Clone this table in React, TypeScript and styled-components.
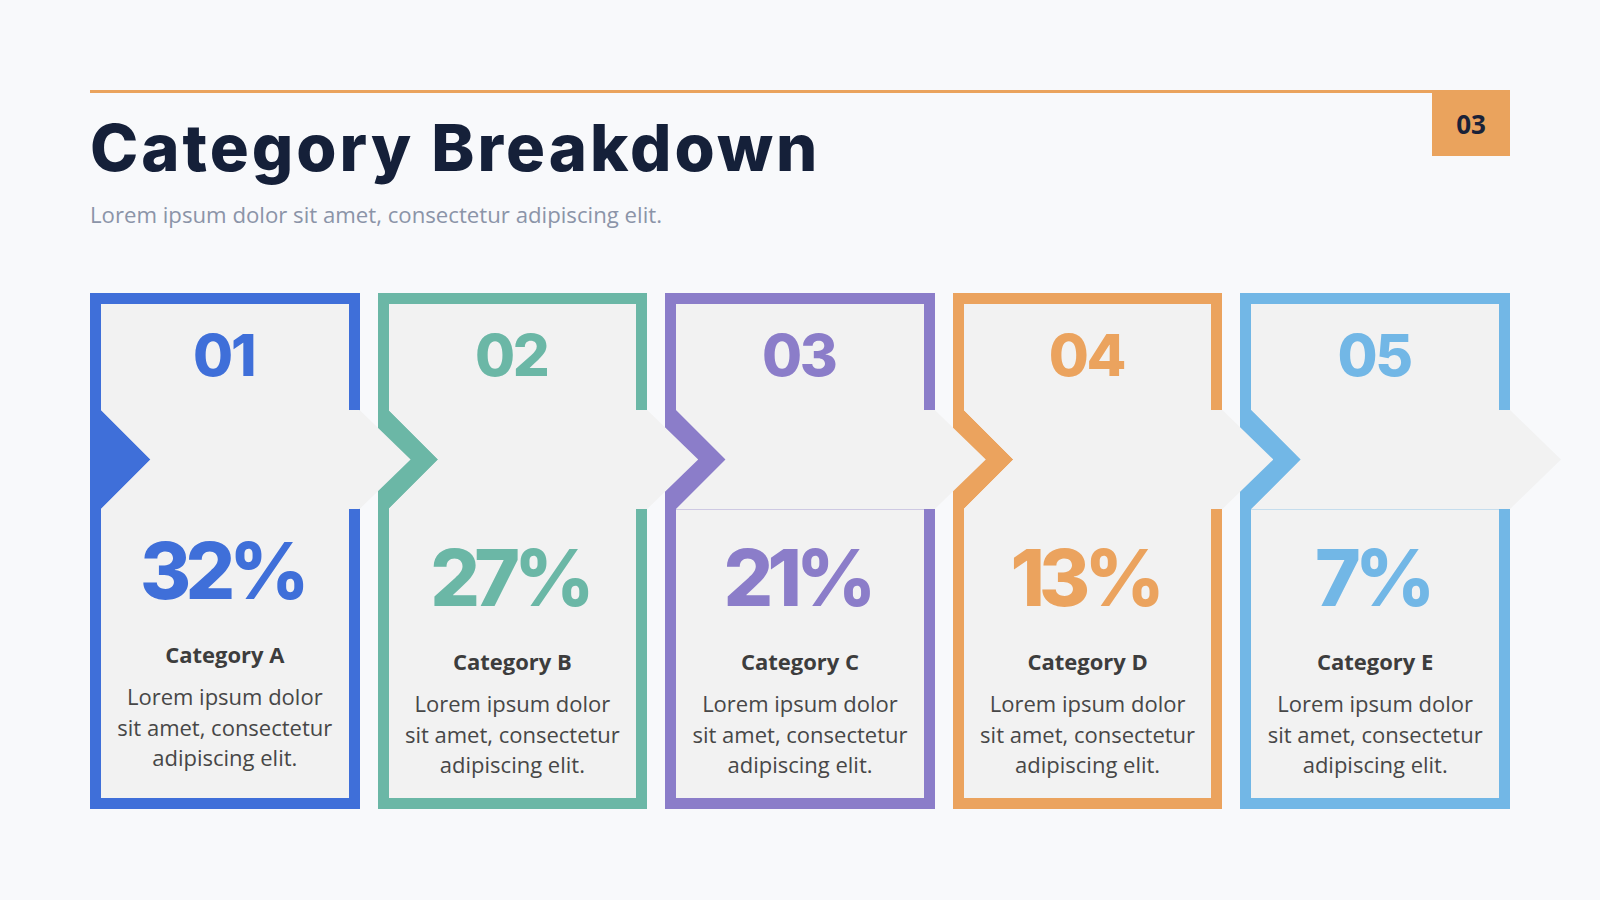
import React from "react";
import styled, { createGlobalStyle } from "styled-components";

const GlobalStyle = createGlobalStyle`
  html, body {
    margin: 0;
    padding: 0;
    background: #f8f9fb;
  }
  body {
    font-family: "Open Sans", "Noto Sans", sans-serif;
  }
  * { box-sizing: border-box; }
`;

const Page = styled.div`
  width: 1600px;
  height: 900px;
  padding: 90px 90px 0 90px;
  background: #f8f9fb;
  overflow: hidden;
`;

const Header = styled.header`
  display: flex;
  align-items: flex-start;
`;

const HeaderMain = styled.div`
  flex: 1;
  border-top: 3px solid #eaa35d;
`;

const Title = styled.h1`
  margin: 16px 0 0 0;
  font-family: "Inter", "Noto Sans", sans-serif;
  font-weight: 800;
  font-size: 65px;
  line-height: 1.2;
  color: #152039;
  letter-spacing: 3px;
`;

const Subtitle = styled.p`
  margin: 13px 0 0 0;
  font-family: "Open Sans", sans-serif;
  font-size: 22.2px;
  line-height: 30px;
  color: #8b94a8;
`;

const Badge = styled.div`
  width: 78px;
  height: 66px;
  background: #eaa35d;
  display: flex;
  align-items: center;
  justify-content: center;
  padding-top: 2px;
  font-family: "Open Sans", sans-serif;
  font-weight: 700;
  font-size: 26px;
  color: #1a2238;
`;

const Cards = styled.div`
  margin-top: 63px;
  display: grid;
  grid-template-columns: repeat(5, 1fr);
  column-gap: 18px;
`;

const Card = styled.div<{ $c: string }>`
  position: relative;
  height: 516px;
  border: 11px solid ${(p) => p.$c};
  background: #f2f2f2;
  display: flex;
  flex-direction: column;
`;

const NumberArea = styled.div`
  height: 106px;
  padding-top: 22px;
  display: flex;
  justify-content: center;
`;

const Number = styled.span<{ $c: string }>`
  font-family: "Inter", "Noto Sans", sans-serif;
  font-weight: 800;
  font-size: 58px;
  line-height: 1;
  letter-spacing: -0.04em;
  padding-right: 0.04em;
  color: ${(p) => p.$c};
`;

const ArrowBand = styled.div`
  position: relative;
  height: 99px;
`;

const Notch = styled.div<{ $c: string }>`
  position: absolute;
  z-index: 1;
  top: 0;
  left: -11px;
  width: 60.5px;
  height: 99px;
  background: ${(p) => p.$c};
  clip-path: polygon(0 0, 11px 0, 100% 50%, 11px 100%, 0 100%);
`;

const Arrow = styled.div`
  position: absolute;
  z-index: 2;
  top: 0;
  left: 0;
  width: calc(100% + 62px);
  height: 99px;
  background: #f2f2f2;
  clip-path: polygon(
    0 0,
    calc(100% - 51px) 0,
    100% 50%,
    calc(100% - 51px) 100%,
    0 100%,
    49.5px 50%
  );
`;

const Divider = styled.div<{ $c: string }>`
  position: absolute;
  z-index: 3;
  left: 0;
  right: 0;
  top: 99px;
  height: 1px;
  background: ${(p) => p.$c};
  opacity: 0.35;
`;

const Bottom = styled.div<{ $offset: number }>`
  flex: 1;
  padding-top: ${(p) => 30 - p.$offset}px;
  text-align: center;
  display: flex;
  flex-direction: column;
  align-items: center;
`;

const Percent = styled.div<{ $c: string }>`
  font-family: "Inter", "Noto Sans", sans-serif;
  font-weight: 800;
  font-size: 78px;
  line-height: 1;
  letter-spacing: -0.075em;
  padding-right: 0.075em;
  color: ${(p) => p.$c};
`;

const Label = styled.div`
  margin-top: 29px;
  font-family: "Open Sans", sans-serif;
  font-weight: 700;
  font-size: 22px;
  line-height: 30px;
  color: #3d3d3d;
`;

const Body = styled.p`
  margin: 12px 0 0 0;
  max-width: 221px;
  font-family: "Open Sans", sans-serif;
  font-size: 22px;
  line-height: 30.5px;
  color: #474747;
`;

type Item = {
  n: string;
  pct: string;
  label: string;
  color: string;
  divider?: boolean;
  offset?: number;
};

const items: Item[] = [
  { n: "01", pct: "32%", label: "Category A", color: "#3f6fd9", offset: 7 },
  { n: "02", pct: "27%", label: "Category B", color: "#6bb7a6" },
  { n: "03", pct: "21%", label: "Category C", color: "#8b7dc9", divider: true },
  { n: "04", pct: "13%", label: "Category D", color: "#eba35e" },
  { n: "05", pct: "7%", label: "Category E", color: "#72b7e6", divider: true },
];

export default function App() {
  return (
    <>
      <GlobalStyle />
      <Page>
        <Header>
          <HeaderMain>
            <Title>Category Breakdown</Title>
            <Subtitle>Lorem ipsum dolor sit amet, consectetur adipiscing elit.</Subtitle>
          </HeaderMain>
          <Badge>03</Badge>
        </Header>
        <Cards>
          {items.map((it) => (
            <Card key={it.n} $c={it.color}>
              <NumberArea>
                <Number $c={it.color}>{it.n}</Number>
              </NumberArea>
              <ArrowBand>
                <Notch $c={it.color} />
                <Arrow />
                {it.divider && <Divider $c={it.color} />}
              </ArrowBand>
              <Bottom $offset={it.offset ?? 0}>
                <Percent $c={it.color}>{it.pct}</Percent>
                <Label>{it.label}</Label>
                <Body>Lorem ipsum dolor sit amet, consectetur adipiscing elit.</Body>
              </Bottom>
            </Card>
          ))}
        </Cards>
      </Page>
    </>
  );
}
